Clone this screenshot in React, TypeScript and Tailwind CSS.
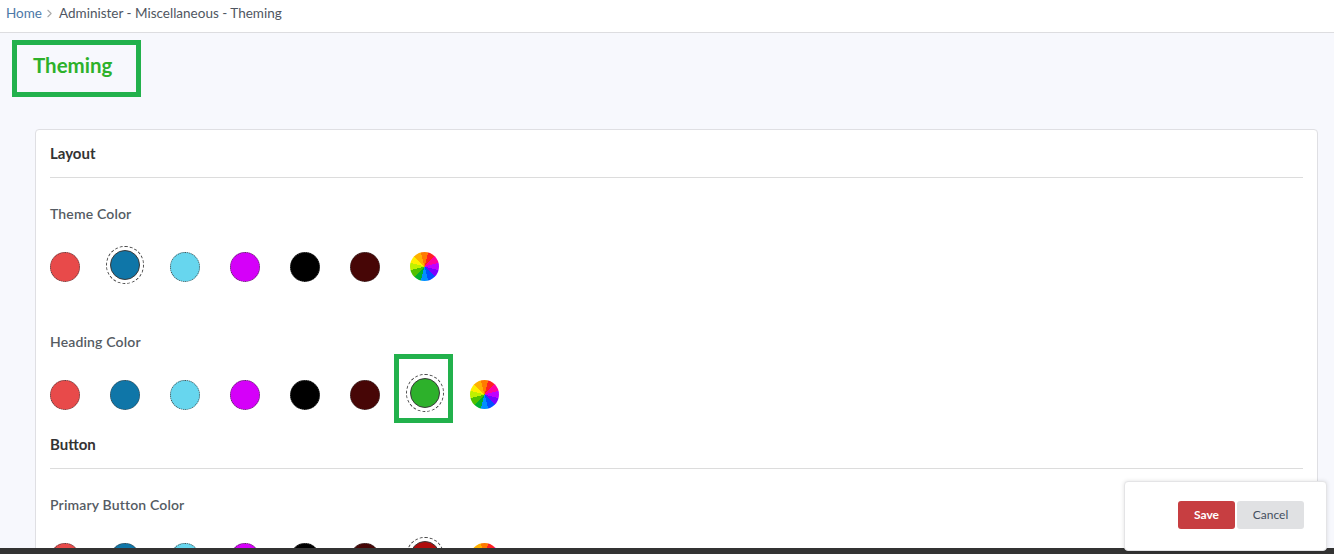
import { ChevronRight } from 'lucide-react';

const colors = ['#e84a4a', '#0f76a8', '#67d6ee', '#d500f9', '#000000', '#470606'];

const Wheel = () => (
  <div className="size-[30px] shrink-0 flex items-center justify-center -translate-x-[1px] -translate-y-[1px]">
    <div className="size-[29px] rounded-full blur-[0.6px] bg-[conic-gradient(from_-15deg,#ff7a00_0deg_30deg,#ff2020_30deg_60deg,#ff00a0_60deg_90deg,#c000ff_90deg_120deg,#7a00ff_120deg_150deg,#0050ff_150deg_180deg,#0090ff_180deg_210deg,#00b030_210deg_240deg,#50c000_240deg_270deg,#c0f000_270deg_300deg,#ffee00_300deg_330deg,#ffb000_330deg_360deg)]" />
  </div>
);

const Swatch = ({ color, selected, marked }: { color: string; selected?: boolean; marked?: boolean }) => (
  <div className="relative size-[30px] shrink-0">
    <div
      className={
        selected
          ? 'relative size-[30px] -translate-y-[2px] rounded-full border border-[#3a3a3a]'
          : 'size-[30px] rounded-full border border-dotted border-[#444]'
      }
      style={{ backgroundColor: color }}
    >
      {selected && <div className="absolute -inset-[5px] rounded-full border border-dashed border-[#444]" />}
    </div>
    {marked && <div className="absolute -left-[16px] -top-[26px] w-[59px] h-[69px] border-[5px] border-[#22b14c]" />}
  </div>
);

const SwatchRow = ({ selected, extra, marked }: { selected?: number; extra?: string; marked?: boolean }) => (
  <div className="mt-[30px] flex items-start gap-[30px]">
    {colors.map((c) => (
      <Swatch key={c} color={c} selected={selected === colors.indexOf(c)} />
    ))}
    {extra && <Swatch color={extra} selected marked={marked} />}
    <Wheel />
  </div>
);

const SectionTitle = ({ children }: { children: React.ReactNode }) => (
  <h2 className="h-[48px] flex items-center border-b border-[#dcdcdc] text-[15px] font-bold text-[#333]">{children}</h2>
);

const Label = ({ children, className }: { children: React.ReactNode; className: string }) => (
  <div className={`${className} h-4 flex items-center -translate-y-[1px] text-[14px] font-semibold tracking-[0.15px] text-[#555b63]`}>{children}</div>
);

export default function App() {
  return (
    <div className="relative h-[554px] w-[1334px] overflow-hidden flex flex-col bg-[#f7f8fd] font-['Lato','Open_Sans',sans-serif]">
      <div className="h-[33px] shrink-0 bg-white border-b border-[#dddde0] flex items-center pl-[6px] pb-[6px] text-[13.5px] text-[#4f5661]">
        <span className="text-[#4c79a8]">Home</span>
        <ChevronRight size={13} strokeWidth={2} className="mx-[1px] text-[#aaa]" />
        <span className="ml-[2px]">Administer - Miscellaneous - Theming</span>
      </div>

      <div className="flex-1 min-h-0 overflow-hidden">
        <div className="mt-[7px] ml-[12px] w-[129px] h-[57px] border-[5px] border-[#22b14c] flex items-center pl-[16px] pb-[6px]">
          <h1 className="text-[20.5px] font-bold text-[#2db12b]">Theming</h1>
        </div>

        <div className="mt-[32px] ml-[35px] w-[1283px] rounded-[4px] border border-[#dfdfe3] bg-white px-[14px] pb-4">
          <SectionTitle>Layout</SectionTitle>
          <Label className="mt-[28px]">Theme Color</Label>
          <SwatchRow selected={1} />

          <Label className="mt-[52px]">Heading Color</Label>
          <SwatchRow extra="#2db12b" marked />

          <div className="mt-[11px]">
            <SectionTitle>Button</SectionTitle>
          </div>
          <Label className="mt-[28px]">Primary Button Color</Label>
          <SwatchRow extra="#b00d0d" />
        </div>
      </div>

      <div className="h-[6px] shrink-0 bg-[#333]" />

      <div className="absolute left-[1124px] top-[481px] w-[203px] h-[70px] rounded-[4px] bg-white border border-[#e4e4e6] shadow-[0_0_4px_rgba(0,0,0,0.12)] flex items-center justify-end gap-[2px] pr-[22px] pb-[2px]">
        <button className="h-[28px] w-[57px] rounded-[3px] bg-[#c73e41] text-[12px] font-bold text-white">Save</button>
        <button className="h-[28px] w-[67px] rounded-[3px] bg-[#e0e1e3] text-[12px] text-[#444f5f]">Cancel</button>
      </div>
    </div>
  );
}
